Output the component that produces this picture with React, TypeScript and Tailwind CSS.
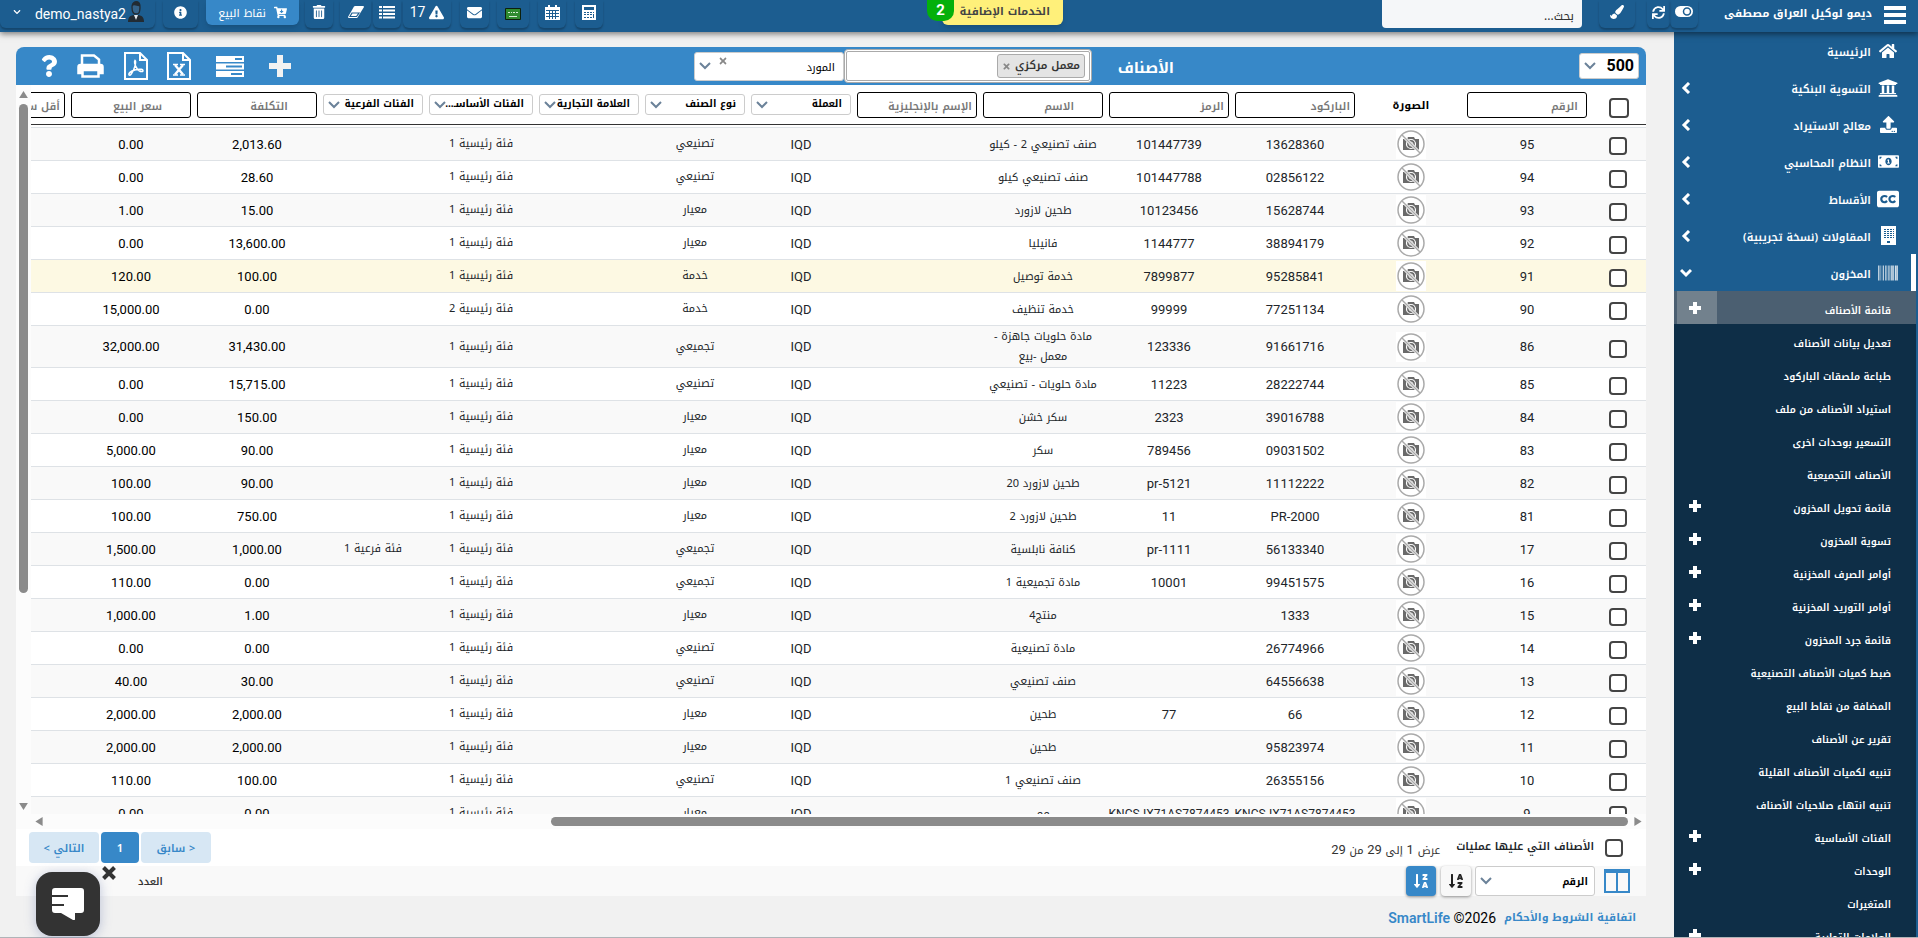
import type { ReactNode } from "react";
import {
  FaHome, FaUniversity, FaUpload, FaMoneyBillAlt, FaClosedCaptioning, FaBarcode, FaChevronDown,
  FaQuestion, FaSortAlphaDown, FaSortAlphaDownAlt, FaSync, FaPaintBrush,
  FaTrashAlt, FaCartArrowDown, FaExclamationTriangle, FaInfoCircle, FaEnvelope, FaTimes,
} from "react-icons/fa";

type Row = {
  id: string; barcode: string; code: string; name: string; type: string;
  main: string; sub?: string; cost: string; price: string; hot?: boolean;
};

const M1 = "فئة رئيسية 1";
const rows: Row[] = [
  { id: "95", barcode: "13628360", code: "101447739", name: "صنف تصنيعي 2 - كيلو", type: "تصنيعي", main: M1, cost: "2,013.60", price: "0.00" },
  { id: "94", barcode: "02856122", code: "101447788", name: "صنف تصنيعي كيلو", type: "تصنيعي", main: M1, cost: "28.60", price: "0.00" },
  { id: "93", barcode: "15628744", code: "10123456", name: "طحين لازورد", type: "معيار", main: M1, cost: "15.00", price: "1.00" },
  { id: "92", barcode: "38894179", code: "1144777", name: "فانيليا", type: "معيار", main: M1, cost: "13,600.00", price: "0.00" },
  { id: "91", barcode: "95285841", code: "7899877", name: "خدمة توصيل", type: "خدمة", main: M1, cost: "100.00", price: "120.00", hot: true },
  { id: "90", barcode: "77251134", code: "99999", name: "خدمة تنظيف", type: "خدمة", main: "فئة رئيسية 2", cost: "0.00", price: "15,000.00" },
  { id: "86", barcode: "91661716", code: "123336", name: "مادة حلويات جاهزة -\nمعمل -بيع", type: "تجميعي", main: M1, cost: "31,430.00", price: "32,000.00" },
  { id: "85", barcode: "28222744", code: "11223", name: "مادة حلويات - تصنيعي", type: "تصنيعي", main: M1, cost: "15,715.00", price: "0.00" },
  { id: "84", barcode: "39016788", code: "2323", name: "سكر خشن", type: "معيار", main: M1, cost: "150.00", price: "0.00" },
  { id: "83", barcode: "09031502", code: "789456", name: "سكر", type: "معيار", main: M1, cost: "90.00", price: "5,000.00" },
  { id: "82", barcode: "11112222", code: "pr-5121", name: "طحين لازورد 20", type: "معيار", main: M1, cost: "90.00", price: "100.00" },
  { id: "81", barcode: "PR-2000", code: "11", name: "طحين لازورد 2", type: "معيار", main: M1, cost: "750.00", price: "100.00" },
  { id: "17", barcode: "56133340", code: "pr-1111", name: "كنافة نابلسية", type: "تجميعي", main: M1, sub: "فئة فرعية 1", cost: "1,000.00", price: "1,500.00" },
  { id: "16", barcode: "99451575", code: "10001", name: "مادة تجميعية 1", type: "تجميعي", main: M1, cost: "0.00", price: "110.00" },
  { id: "15", barcode: "1333", code: "", name: "منتج4", type: "معيار", main: M1, cost: "1.00", price: "1,000.00" },
  { id: "14", barcode: "26774966", code: "", name: "مادة تصنيعية", type: "تصنيعي", main: M1, cost: "0.00", price: "0.00" },
  { id: "13", barcode: "64556638", code: "", name: "صنف تصنيعي", type: "تصنيعي", main: M1, cost: "30.00", price: "40.00" },
  { id: "12", barcode: "66", code: "77", name: "طحين", type: "معيار", main: M1, cost: "2,000.00", price: "2,000.00" },
  { id: "11", barcode: "95823974", code: "", name: "طحين", type: "معيار", main: M1, cost: "2,000.00", price: "2,000.00" },
  { id: "10", barcode: "26355156", code: "", name: "صنف تصنيعي 1", type: "تصنيعي", main: M1, cost: "100.00", price: "110.00" },
  { id: "9", barcode: "KNCSJX71AS7874453", code: "KNCSJX71AS7874453", name: "مم", type: "معيار", main: M1, cost: "0.00", price: "0.00" },
];

const subMenu: [string, boolean][] = [
  ["قائمة الأصناف", true], ["تعديل بيانات الأصناف", false], ["طباعة ملصقات الباركود", false],
  ["استيراد الأصناف من ملف", false], ["التسعير بوحدات اخرى", false], ["الأصناف التجميعية", false],
  ["قائمة تحويل المخزون", true], ["تسوية المخزون", true], ["أوامر الصرف المخزنية", true],
  ["أوامر التوريد المخزنية", true], ["قائمة جرد المخزون", true], ["ضبط كميات الأصناف التصنيعية", false],
  ["المضافة من نقاط البيع", false], ["تقرير عن الأصناف", false], ["تنبيه لكميات الأصناف القليلة", false],
  ["تنبيه انتهاء صلاحيات الأصناف", false], ["الفئات الأساسية", true], ["الوحدات", true],
  ["المتغيرات", false], ["العلامات التجارية", true],
];

const BuildingIcon = () => (
  <svg viewBox="0 0 15 19" className="h-[19px] w-[15px]">
    <path fill="#fff" d="M0 0h15v19H0z" />
    {[3, 5, 7, 9, 11].map((y) => (
      <path key={y} stroke="#1c5d90" strokeDasharray="2 1" d={`M3 ${y + 0.5}h10`} />
    ))}
    <path fill="#1c5d90" d="M6 15h3v2H6z" />
  </svg>
);

const mainMenu: { label: string; icon: ReactNode; arrow?: boolean; active?: boolean }[] = [
  { label: "الرئيسية", icon: <FaHome size={18} /> },
  { label: "التسوية البنكية", icon: <FaUniversity size={20} />, arrow: true },
  { label: "معالج الاستيراد", icon: <FaUpload size={17} />, arrow: true },
  { label: "النظام المحاسبي", icon: <FaMoneyBillAlt size={21} />, arrow: true },
  { label: "الأقساط", icon: <FaClosedCaptioning size={22} />, arrow: true },
  { label: "المقاولات (نسخة تجريبية)", icon: <BuildingIcon />, arrow: true },
  { label: "المخزون", icon: <FaBarcode size={20} />, arrow: true, active: true },
];

function MenuArrow({ down }: { down?: boolean }) {
  return (
    <svg viewBox="0 0 12 12" className="mb-1 size-3" fill="none" stroke="#fff" strokeWidth="3">
      <path d={down ? "M1 3l5 5 5-5" : "M9 1L4 6l5 5"} />
    </svg>
  );
}

function Select({ label, box, text }: { label: string; box: string; text: string }) {
  return (
    <div className={`relative rounded-[3px] border border-[#ccc] bg-white ${box}`}>
      <select aria-label={label} className={`h-full w-full appearance-none bg-transparent text-black outline-none ${text}`}>
        <option>{label}</option>
      </select>
      <svg viewBox="0 0 12 8" className="pointer-events-none absolute left-1 top-1/2 h-2 w-3 -translate-y-1/2">
        <path d="M1 1l5 5 5-5" fill="none" stroke="#6b8299" strokeWidth="2" />
      </svg>
    </div>
  );
}

function Check({ label, big }: { label: string; big?: boolean }) {
  return (
    <input
      type="checkbox"
      aria-label={label}
      className={`block shrink-0 appearance-none rounded border-2 border-[#444] bg-white ${big ? "size-5" : "size-[18px]"}`}
    />
  );
}

function NoPhoto() {
  return (
    <svg viewBox="0 0 30 30" className="block size-[30px] bg-white" role="img" aria-label="لا توجد صورة">
      <path fill="#6a6a6a" d="M7 10h4l1-2h6l1 2h4v11H7z" />
      <circle cx="15" cy="15" r="4.5" fill="#6a6a6a" stroke="#fff" strokeWidth="1.2" />
      <circle cx="15" cy="15" r="2" fill="none" stroke="#ddd" />
      <path d="M6 6l18 18" stroke="#fff" strokeWidth="3" />
      <path d="M6 6l18 18" stroke="#aaa" strokeWidth="1.5" />
      <circle cx="15" cy="15" r="13" fill="none" stroke="#aaa" strokeWidth="1.5" />
    </svg>
  );
}

function TopButton({ label, width, children }: { label: string; width: string; children: ReactNode }) {
  return (
    <button aria-label={label} className={`flex h-7 shrink-0 items-center justify-center gap-1 rounded-b-md pb-1 shadow-[0_2px_2px_rgba(0,0,0,0.25)] ${width}`}>
      {children}
    </button>
  );
}

function TopBar() {
  return (
    <header className="relative z-10 flex h-8 shrink-0 items-start bg-[#1c5d90] text-white shadow-[0_2px_6px_rgba(0,0,0,0.5)]">
      <div className="flex w-[319px] shrink-0 items-start pr-3">
        <button aria-label="القائمة" className="flex flex-col gap-[3px] pt-[6px]">
          <span className="h-1 w-[22px] bg-white" />
          <span className="h-1 w-[22px] bg-white" />
          <span className="h-1 w-[22px] bg-white" />
        </button>
        <h1 className="mr-3 h-7 w-[174px] whitespace-nowrap text-[11px] font-bold leading-7">ديمو لوكيل العراق مصطفى</h1>
        <div className="flex grow justify-start">
          <TopButton label="تبديل" width="w-7">
            <svg viewBox="0 0 18 12" className="h-3 w-[18px]">
              <rect width="18" height="11" rx="5.5" fill="#fff" />
              <circle cx="12" cy="5.5" r="3.5" fill="#fff" stroke="#1c5d90" strokeWidth="1.5" />
            </svg>
          </TopButton>
          <TopButton label="تحديث" width="w-[23px]"><FaSync size={13} /></TopButton>
        </div>
        <TopButton label="المظهر" width="w-9"><FaPaintBrush size={14} /></TopButton>
      </div>
      <input aria-label="بحث" placeholder="بحث..." className="mr-[17px] h-7 w-[200px] rounded-b-sm bg-[#f5f7f9] px-2 pt-1 text-[12px] text-black outline-none placeholder:text-[#333]" />
      <div className="flex grow justify-center pl-5">
        <button className="relative h-[25px] w-[121px] rounded-b-md bg-[#fff07a] pr-[13px] text-right text-[11px] font-bold text-[#444] shadow-md">
          الخدمات الإضافية
          <span className="absolute -left-[15px] top-0 h-[21px] w-[27px] rounded-b-[10px] bg-[#04b00b] text-center font-[Roboto] text-[15px] leading-5 text-white">2</span>
        </button>
      </div>
      <div className="flex shrink-0 items-start">
        <TopButton label="الحاسبة" width="w-7">
          <svg viewBox="0 0 14 15" className="h-[15px] w-[14px]">
            <path fill="#fff" d="M0 0h14v15H0z" />
            <path fill="#1c5d90" d="M2 2h10v3H2zM2 7h2v1H2zM5 7h2v1H5zM8 7h2v1H8zM2 9h2v1H2zM5 9h2v1H5zM8 9h2v1H8zM2 12h2v1H2zM5 12h2v1H5zM8 12h2v1H8zM11 7h1v1h-1zM11 9h1v4h-1z" />
          </svg>
        </TopButton>
        <div className="mr-[9px] flex">
          <TopButton label="التقويم" width="w-7">
            <svg viewBox="0 0 15 15" className="size-[15px]">
              <path fill="#fff" d="M0 2h3V0h2v2h5V0h2v2h3v13H0z" />
              <path stroke="#1c5d90" d="M1 5.5h13M1 8.5h13M1 11.5h13M4.5 6v8M7.5 6v8M10.5 6v8" />
            </svg>
          </TopButton>
        </div>
        <div className="mr-[9px] flex">
          <TopButton label="اللغة" width="w-8">
            <svg viewBox="0 0 16 12" className="mt-1 h-3 w-4">
              <path fill="#2f8b2f" stroke="#0d200d" d="M.5.5h15v11H.5z" />
              <path stroke="#d4ecd4" d="M3 4.5h2M6 4.5h1M8 4.5h2M11 4.5h2M4 8.5h8" />
            </svg>
          </TopButton>
        </div>
        <div className="mr-2 flex"><TopButton label="الرسائل" width="w-[29px]"><FaEnvelope size={15} /></TopButton></div>
        <div className="mr-[9px] flex">
          <TopButton label="التنبيهات" width="w-12"><FaExclamationTriangle size={15} /><span className="font-[Roboto] text-[14px]">17</span></TopButton>
        </div>
        <div className="mr-[2px] flex">
          <TopButton label="السجل" width="w-7">
            <svg viewBox="0 0 16 13" className="h-[13px] w-4">
              <path stroke="#fff" strokeWidth="2" d="M0 1h3M4 1h12M0 4.5h3M4 4.5h12M0 8h3M4 8h12M0 11.5h3M4 11.5h12" />
            </svg>
          </TopButton>
        </div>
        <div className="mr-[2px] flex">
          <TopButton label="مسح" width="w-[31px]">
            <svg viewBox="0 0 16 12" className="h-3 w-4">
              <path fill="#fff" d="M7 0h8q1 0 1 1L9.5 11.5 9 12H1q-1 0-1-1L6 .5z" />
              <path stroke="#1c5d90" strokeWidth="1.2" fill="#fff" d="M2 10.5L4 7h7l-2.5 3.5z" />
            </svg>
          </TopButton>
        </div>
        <div className="mr-[7px] flex"><TopButton label="حذف" width="w-7"><FaTrashAlt size={14} /></TopButton></div>
        <button className="mr-[6px] flex h-[25px] w-[93px] items-center justify-center gap-2 rounded-b-md bg-[#3788c8] text-[11px] shadow-md">
          <FaCartArrowDown size={13} /><span className="pt-1">نقاط البيع</span>
        </button>
        <div className="mr-2 flex"><TopButton label="معلومات" width="w-[35px]"><FaInfoCircle size={13} /></TopButton></div>
        <button aria-label="المستخدم" className="mr-2 flex h-7 w-[155px] items-center rounded-b-md pb-1 pr-[10px] shadow-[0_2px_2px_rgba(0,0,0,0.25)]">
          <svg viewBox="0 0 18 22" className="h-[22px] w-[18px]">
            <path fill="#222b33" d="M1 21c0-6 3-7 8-7s8 1 8 7z" />
            <path fill="#35638a" stroke="#222b33" strokeWidth="1.3" d="M5 6c0-7 8-7 8 0s-2 7-4 7-4-1-4-7z" />
            <path fill="#222b33" d="M5 5c-1-5 9-6 8 0-2 1-5-2-8 0z" />
            <path fill="#e5e9ed" d="M7 14l2 5 2-5z" />
          </svg>
          <span className="mr-px pt-1 font-[Roboto] text-[14px]">demo_nastya2</span>
          <FaChevronDown size={8} className="mr-[14px]" />
        </button>
      </div>
    </header>
  );
}

function Sidebar() {
  return (
    <nav className="w-[244px] shrink-0 overflow-hidden bg-[#1c5d90] pr-[2px] text-white">
      <ul>
        {mainMenu.map((m) => (
          <li key={m.label}>
            <a href="#" className={`flex h-[37px] items-center gap-[6px] pl-[6px] pt-1 ${m.active ? "border-r-[5px] border-white pr-3" : "pr-[17px]"}`}>
              <span className="flex w-[22px] justify-center pb-1">{m.icon}</span>
              <span className="grow pt-[2px] text-[11px] font-semibold">{m.label}</span>
              {m.arrow && <MenuArrow down={m.active} />}
            </a>
          </li>
        ))}
      </ul>
      <ul className="bg-[#0e2e47]">
        {subMenu.map(([label, plus], i) => (
          <li key={label} className={`flex h-[33px] items-center pl-[3px] pr-[25px] ${i === 0 ? "bg-[#4b5f71]" : ""}`}>
            <a href="#" className="grow pt-[5px] text-[10px] font-semibold">{label}</a>
            {plus && (
              <button aria-label={`إضافة ${label}`} className={`flex h-full w-10 items-center justify-center pr-[5px] ${i === 0 ? "bg-[#72818d]" : ""}`}>
                <svg viewBox="0 0 12 12" className="size-3"><path stroke="#fff" strokeWidth="4" d="M0 6h12M6 0v12" /></svg>
              </button>
            )}
          </li>
        ))}
      </ul>
    </nav>
  );
}

function Toolbar() {
  return (
    <div className="flex h-[38px] shrink-0 items-center rounded-t-lg bg-[#3788c8] pl-[22px] pr-[7px] text-white">
      <Select label="500" box="h-[26px] w-[60px]" text="pr-1 font-[Roboto] text-[16px] font-bold" />
      <h2 className="mr-[405px] w-[55px] whitespace-nowrap pt-1 text-[15px] font-bold">الأصناف</h2>
      <div className="mr-[27px] flex h-[34px] w-[248px] items-center rounded-sm border-[3px] border-double border-[#aaa] bg-white pr-1">
        <span className="flex h-6 items-center gap-1 rounded-[3px] border border-[#aaa] bg-[#e4e4e4] px-1 text-[11px] font-semibold text-[#333]">
          معمل مركزي
          <button aria-label="إزالة" className="text-[#888]"><FaTimes size={9} /></button>
        </span>
      </div>
      <div className="relative">
        <Select label="المورد" box="h-[29px] w-[150px]" text="pr-2 pt-1 text-[11px]" />
        <button aria-label="مسح المورد" className="absolute left-[24px] top-1 text-[#888]"><FaTimes size={10} /></button>
      </div>
      <div className="flex grow items-center justify-end">
        <button aria-label="إضافة">
          <svg viewBox="0 0 22 22" className="size-[22px]"><path stroke="#f2f2f2" strokeWidth="6" d="M0 11h22M11 0v22" /></svg>
        </button>
        <button aria-label="خيارات" className="mr-[25px]">
          <svg viewBox="0 0 28 21" className="h-[21px] w-7">
            <path fill="#fff" d="M0 0h28v6H0zM0 7.5h28v6H0zM0 15h28v6H0z" />
            <path fill="#3788c8" d="M19 2h7v2h-7zM10 9.5h16v2H10zM15 17h11v2H15z" />
          </svg>
        </button>
        <button aria-label="تصدير إكسل" className="mr-[25px]">
          <svg viewBox="0 0 24 28" className="h-7 w-6" fill="none" stroke="#fff" strokeWidth="2">
            <path d="M1 1h15l7 7v19H1zM16 1v7h7" />
            <path strokeWidth="2.4" d="M8 13l8 9.5M16 13l-8 9.5" />
            <path strokeWidth="1.6" d="M6 12.5h5M13 12.5h5M6 23h5M13 23h5" />
          </svg>
        </button>
        <button aria-label="تصدير PDF" className="mr-[19px]">
          <svg viewBox="0 0 24 28" className="h-7 w-6" fill="none" stroke="#fff" strokeWidth="2">
            <path d="M1 1h15l7 7v19H1zM16 1v7h7" />
            <path strokeWidth="1.5" d="M11 8.5c-1.500 2 .5 5.500 2 8 1.500 2.200 3.500 3.300 5.500 3 1-.5.5-2-1-2.200-3-.3-7 .5-9.500 1.700-2.500 1.500-3.500 3-3 4 1.500 1 3-2 4.500-5 1.500-3.500 2.500-6.500 2-9z" />
          </svg>
        </button>
        <button aria-label="طباعة" className="mr-5">
          <svg viewBox="0 0 27 24" className="h-6 w-[27px]" fill="none" stroke="#fff" strokeWidth="2.5">
            <path d="M5 12V1.5h12l5 4V12" />
            <path fill="#fff" d="M1.5 19v-6q0-2 2-2h20q2 0 2 2v6h-4v-3h-16v3z" />
            <path d="M5.5 16v6.500h16V16z" fill="#3788c8" />
          </svg>
        </button>
        <button aria-label="مساعدة" className="mr-[17px]"><FaQuestion size={22} /></button>
      </div>
    </div>
  );
}

function HeadInput({ label, pad }: { label: string; pad: string }) {
  return (
    <input aria-label={label} placeholder={label} className={`block h-[26px] w-full rounded-[3px] border border-black bg-white pt-1 text-[11px] outline-none placeholder:font-semibold placeholder:text-[#777] ${pad}`} />
  );
}

const th = "px-[3px] py-0 align-middle font-normal";
const td = "border-b border-[#dee2e6] p-0 text-center";
const num = "font-[Roboto] text-[13px]";
const headSelect = "pr-2 pb-[2px] text-[10px] font-bold";

function Items() {
  return (
    <div className="flex min-h-0 grow">
      <div className="flex min-w-0 grow flex-col bg-white">
        <div className="min-h-0 grow overflow-hidden">
          <table className="w-[1704px] table-fixed border-separate border-spacing-0 text-[11px] text-[#212529]">
            <colgroup>
              <col className="w-[56px]" /><col className="w-[126px]" /><col className="w-[106px]" /><col className="w-[126px]" />
              <col className="w-[126px]" /><col className="w-[126px]" /><col className="w-[126px]" /><col className="w-[106px]" />
              <col className="w-[106px]" /><col className="w-[106px]" /><col className="w-[110px]" /><col className="w-[106px]" />
              <col className="w-[126px]" /><col className="w-[126px]" /><col className="w-[126px]" />
            </colgroup>
            <thead>
              <tr className="h-[39px]">
                <th className="p-0 pr-[17px] pt-[6px]"><Check label="تحديد الكل" big /></th>
                <th className={th}><HeadInput label="الرقم" pad="pr-2" /></th>
                <th className="p-0 pt-1 text-center font-bold text-black">الصورة</th>
                <th className={th}><HeadInput label="الباركود" pad="pr-1" /></th>
                <th className={th}><HeadInput label="الرمز" pad="pr-1" /></th>
                <th className={th}><HeadInput label="الاسم" pad="pr-7" /></th>
                <th className={th}><HeadInput label="الإسم بالإنجليزية" pad="pr-1" /></th>
                <th className={th}><Select label="العملة" box="h-[21px]" text={headSelect} /></th>
                <th className={th}><Select label="نوع الصنف" box="h-[21px]" text={headSelect} /></th>
                <th className={th}><Select label="العلامة التجارية" box="h-[21px]" text={headSelect} /></th>
                <th className={th}><Select label="الفئات الأساسـ..." box="h-[21px]" text={headSelect} /></th>
                <th className={th}><Select label="الفئات الفرعية" box="h-[21px]" text={headSelect} /></th>
                <th className={th}><HeadInput label="التكلفة" pad="pr-7" /></th>
                <th className={th}><HeadInput label="سعر البيع" pad="pr-7" /></th>
                <th className={th}><HeadInput label="أقل سعر للبيع" pad="pr-1" /></th>
              </tr>
              <tr><th colSpan={15} className="h-1 border-b border-t border-b-[#dee2e6] border-t-[#333] p-0" /></tr>
            </thead>
            <tbody>
              {rows.map((r, i) => (
                <tr key={r.id} className={r.hot ? "bg-[#fdf9e3]" : i % 2 ? "bg-white" : "bg-[#f9f9f9]"}>
                  <td className={`${td} pr-[19px] pt-1`}><Check label={`تحديد ${r.id}`} /></td>
                  <td className={`${td} ${num} pt-px`}>{r.id}</td>
                  <td className={td}><div className="flex h-8 items-center justify-center"><NoPhoto /></div></td>
                  <td className={`${td} font-[Roboto] pt-px whitespace-nowrap ${r.barcode.length > 12 ? "text-[12px]" : "text-[13px]"}`}>{r.barcode}</td>
                  <td className={`${td} font-[Roboto] pt-px whitespace-nowrap ${r.code.length > 12 ? "text-[12px]" : "text-[13px]"}`}>{r.code}</td>
                  <td className={`${td} pt-px whitespace-pre leading-5`}>{r.name}</td>
                  <td className={td} />
                  <td className={`${td} ${num} pt-px`}>IQD</td>
                  <td className={`${td} pt-px`}>{r.type}</td>
                  <td className={td} />
                  <td className={`${td} pt-px`}>{r.main}</td>
                  <td className={`${td} pt-px`}>{r.sub}</td>
                  <td className={`${td} ${num} pt-px text-black`}>{r.cost}</td>
                  <td className={`${td} ${num} pt-px text-black`}>{r.price}</td>
                  <td className={td} />
                </tr>
              ))}
            </tbody>
          </table>
        </div>
        <div className="flex h-[15px] shrink-0 items-center bg-[#fcfcfc] px-1">
          <svg viewBox="0 0 8 10" className="h-[9px] w-2"><path fill="#8b8b8b" d="M0 0l8 5-8 5z" /></svg>
          <div className="mr-[6px] h-[9px] w-[67%] rounded-full bg-[#8b8b8b]" />
          <div className="grow" />
          <svg viewBox="0 0 8 10" className="h-[9px] w-2"><path fill="#8b8b8b" d="M8 0L0 5l8 5z" /></svg>
        </div>
      </div>
      <div className="flex w-[15px] shrink-0 flex-col items-center bg-[#fcfcfc] pb-[19px] pt-[6px]">
        <svg viewBox="0 0 10 8" className="h-[7px] w-[9px]"><path fill="#8b8b8b" d="M0 8l5-8 5 8z" /></svg>
        <div className="mt-[6px] h-[68%] w-[9px] rounded-full bg-[#8b8b8b]" />
        <div className="grow" />
        <svg viewBox="0 0 10 8" className="h-[7px] w-[9px]"><path fill="#8b8b8b" d="M0 0l5 8 5-8z" /></svg>
      </div>
    </div>
  );
}

function Bottom() {
  return (
    <>
      <div className="flex h-[37px] shrink-0 items-center bg-white pl-[13px] pr-[23px]">
        <label className="flex items-center gap-[11px] text-[11px] font-semibold text-[#212529]">
          <Check label="الأصناف التي عليها عمليات" />
          <span className="whitespace-nowrap">الأصناف التي عليها عمليات</span>
        </label>
        <p className="mr-4 grow pt-1 text-[11px] text-[#333]">عرض <span className={num}>1</span> إلى <span className={num}>29</span> من <span className={num}>29</span></p>
        <div className="flex gap-[2px] text-[11px] font-semibold text-[#3788c8]">
          <button className="h-[31px] w-[70px] rounded bg-[#d7e7f4] pt-1">&lt; سابق</button>
          <button className="h-[31px] w-[38px] rounded bg-[#3788c8] pt-1 text-white">1</button>
          <button className="h-[31px] w-[70px] rounded bg-[#d7e7f4] pt-1">التالي &gt;</button>
        </div>
      </div>
      <div className="flex h-[30px] shrink-0 items-center bg-[#f9f9f9] pr-4">
        <button aria-label="الأعمدة">
          <svg viewBox="0 0 26 24" className="h-6 w-[26px]">
            <path fill="none" stroke="#3788c8" strokeWidth="2" d="M1 1h24v22H1zM13 3v20" />
            <path fill="#3788c8" d="M0 0h26v4H0z" />
          </svg>
        </button>
        <div className="mr-[9px]"><Select label="الرقم" box="h-[30px] w-[120px]" text="pr-[6px] text-[10px] font-bold" /></div>
        <button aria-label="ترتيب تصاعدي" className="mr-1 flex size-[30px] items-center justify-center rounded bg-[#f8f8f8] text-[#222] shadow-[0_1px_3px_rgba(0,0,0,0.4)]"><FaSortAlphaDown size={16} /></button>
        <button aria-label="ترتيب تنازلي" className="mr-[5px] flex size-[30px] items-center justify-center rounded bg-[#3788c8] text-white shadow-[0_1px_3px_rgba(0,0,0,0.4)]"><FaSortAlphaDownAlt size={16} /></button>
        <span className="grow pl-[122px] text-left text-[10px] font-semibold text-[#333]">العدد</span>
      </div>
    </>
  );
}

export default function App() {
  return (
    <div dir="rtl" className="flex h-screen flex-col overflow-hidden border-b border-[#b0b4b8] bg-[#f1f1f1] font-['Noto_Kufi_Arabic','Noto_Sans_Arabic','DejaVu_Sans',sans-serif]">
      <TopBar />
      <div className="flex min-h-0 grow">
        <Sidebar />
        <main className="flex min-w-0 grow flex-col pl-4 pr-7 pt-[15px]">
          <Toolbar />
          <Items />
          <Bottom />
          <footer className="flex h-[41px] shrink-0 items-center gap-2 pr-[10px] pt-1">
            <a href="#" className="text-[11px] font-bold text-[#3788c8]">اتفاقية الشروط والأحكام</a>
            <span dir="ltr" className="font-[Roboto] text-[14px] text-black"><b className="font-semibold text-[#3788c8]">SmartLife</b> ©2026</span>
          </footer>
        </main>
      </div>
      <div className="absolute bottom-[2px] left-9 z-20">
        <button aria-label="محادثة" className="flex size-16 items-center justify-center rounded-2xl bg-[#333] shadow-[0_2px_12px_rgba(80,100,160,0.35)]">
          <svg viewBox="0 0 32 32" className="size-8">
            <path fill="#fff" d="M3 0h26q3 0 3 3v19q0 3-3 3h-6v6q0 2-2 1L9 25H3q-3 0-3-3V3q0-3 3-3z" />
            <path stroke="#333" strokeWidth="2" d="M0 8h16M0 17h12" />
          </svg>
        </button>
        <button aria-label="إغلاق" className="absolute -right-[16px] -top-[6px] text-[#333]">
          <svg viewBox="0 0 14 14" className="size-[14px]"><path stroke="currentColor" strokeWidth="4" d="M1.500 1.500l11 11M12.500 1.500l-11 11" /></svg>
        </button>
      </div>
    </div>
  );
}
